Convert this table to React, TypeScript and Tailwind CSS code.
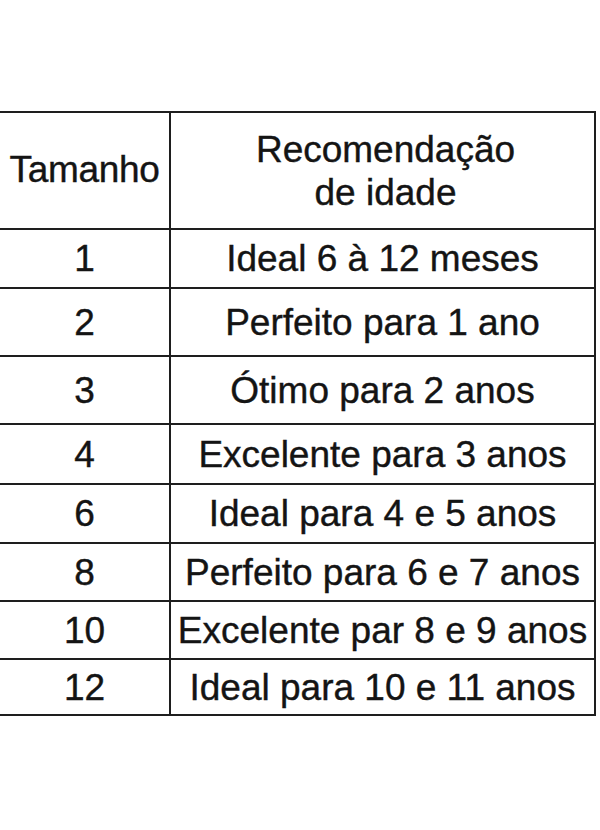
const rows = [
  { size: '1', text: 'Ideal 6 à 12 meses', h: 'h-[59px]' },
  { size: '2', text: 'Perfeito para 1 ano', h: 'h-[68px]' },
  { size: '3', text: 'Ótimo para 2 anos', h: 'h-[68px]' },
  { size: '4', text: 'Excelente para 3 anos', h: 'h-[60px]' },
  { size: '6', text: 'Ideal para 4 e 5 anos', h: 'h-[59px]' },
  { size: '8', text: 'Perfeito para 6 e 7 anos', h: 'h-[58px]' },
  { size: '10', text: 'Excelente par 8 e 9 anos', h: 'h-[58px]' },
  { size: '12', text: 'Ideal para 10 e 11 anos', h: 'h-[54px]' },
]

export default function App() {
  return (
    <div className="w-[600px] h-[830px] bg-white overflow-hidden pt-[111px] font-['Liberation_Sans',Arial,sans-serif] text-[37px] leading-[1.15] text-[#141414] [-webkit-text-stroke:0.4px_#141414]">
      <div className="-ml-[4px] w-[600px] border-2 border-[#1e1e1e]">
        {/* header */}
        <div className="flex h-[117px] border-b-2 border-[#1e1e1e]">
          <div className="w-[173px] border-r-2 border-[#1e1e1e] flex items-center justify-center pl-[2px] tracking-[-0.3px]">
            Tamanho
          </div>
          <div className="flex-1 flex flex-col items-center justify-center text-center pl-[6px] pt-[2px]">
            <span>Recomendação</span>
            <span>de idade</span>
          </div>
        </div>

        {rows.map((r, i) => (
          <div
            key={r.size}
            className={`flex ${r.h} ${i < rows.length - 1 ? 'border-b-2 border-[#1e1e1e]' : ''}`}
          >
            <div className="w-[173px] border-r-2 border-[#1e1e1e] flex items-center justify-center pl-[2px] pt-[2px]">
              {r.size}
            </div>
            <div className="flex-1 flex items-center justify-center whitespace-nowrap pt-[2px]">
              {r.text}
            </div>
          </div>
        ))}
      </div>
    </div>
  )
}
